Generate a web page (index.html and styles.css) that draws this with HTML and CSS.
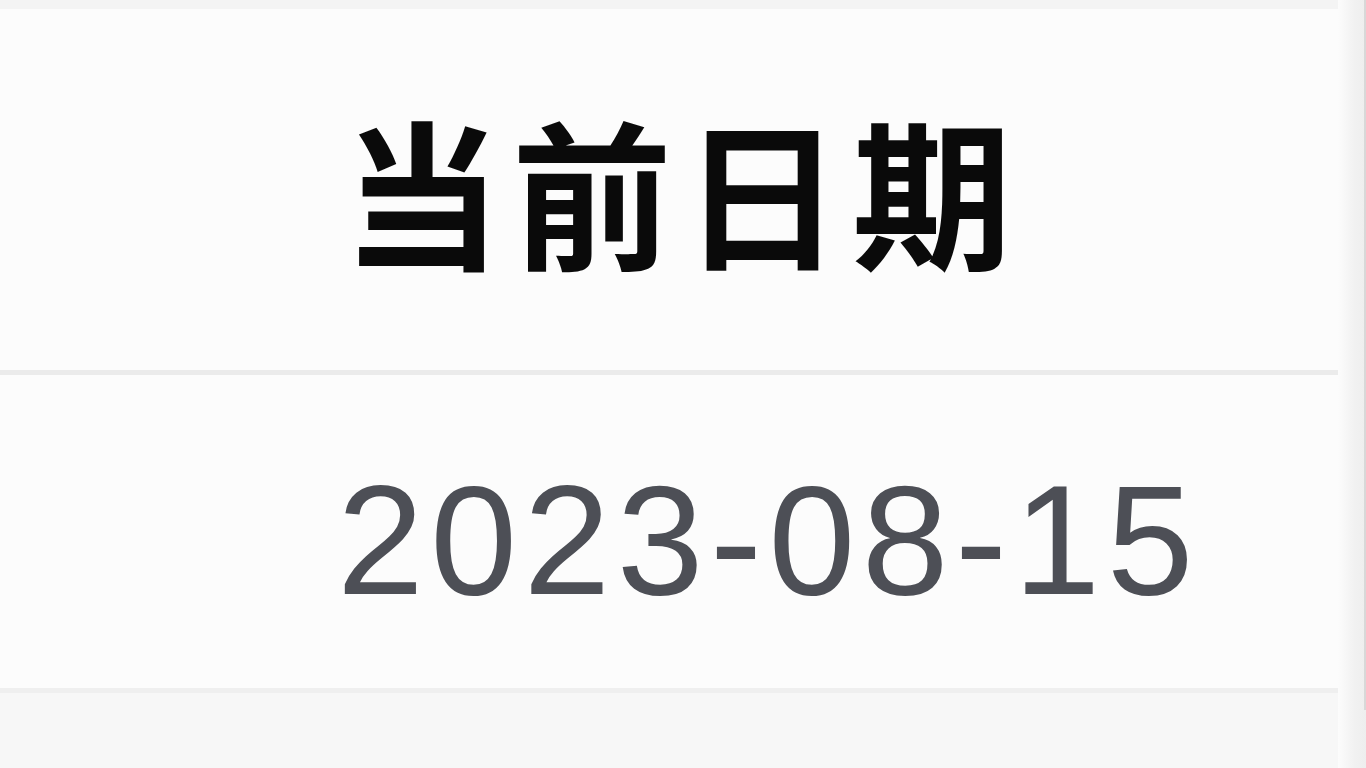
FILE: index.html
```html
<!DOCTYPE html>
<html lang="zh-CN">
<head>
<meta charset="utf-8">
<title>当前日期</title>
<link rel="stylesheet" href="styles.css">
</head>
<body>
<div class="page">
  <div class="table">
    <div class="top-strip"></div>
    <div class="cell head"><span>当前日期</span></div>
    <div class="cell body"><span>2023-08-15</span></div>
    <div class="foot"></div>
  </div>
  <div class="edge"><div class="edge-line"></div></div>
</div>
</body>
</html>
```
FILE: styles.css
```css
html, body {
  margin: 0;
  padding: 0;
  width: 1366px;
  height: 768px;
  overflow: hidden;
  background: #fcfcfc;
}
.page {
  display: flex;
  width: 1366px;
  height: 768px;
}
.table {
  flex: 1;
  display: flex;
  flex-direction: column;
}
.top-strip {
  height: 9px;
  background: #f4f4f4;
}
.cell {
  display: flex;
  align-items: center;
  box-sizing: border-box;
}
.head {
  height: 366px;
  padding-left: 342px;
  padding-bottom: 4px;
  border-bottom: 5px solid #ebebeb;
  font-family: "Noto Sans CJK SC", sans-serif;
  font-weight: 700;
  font-size: 160px;
  line-height: 1;
  letter-spacing: 10px;
  color: #0a0a0a;
}
.body {
  height: 318px;
  padding-left: 337px;
  padding-top: 16px;
  border-bottom: 5px solid #efefef;
  font-family: "Liberation Sans", Arial, sans-serif;
  font-size: 156px;
  line-height: 1;
  letter-spacing: 6.5px;
  color: #4d4f56;
}
.foot {
  flex: 1;
  background: #f7f7f7;
}
.edge {
  width: 28px;
  display: flex;
  justify-content: flex-end;
  background: linear-gradient(to right, #fcfcfc 0%, #f1f1f1 60%, #eeeeee 100%);
}
.edge-line {
  width: 2px;
  height: 710px;
  background: #d8d8d8;
}
```
